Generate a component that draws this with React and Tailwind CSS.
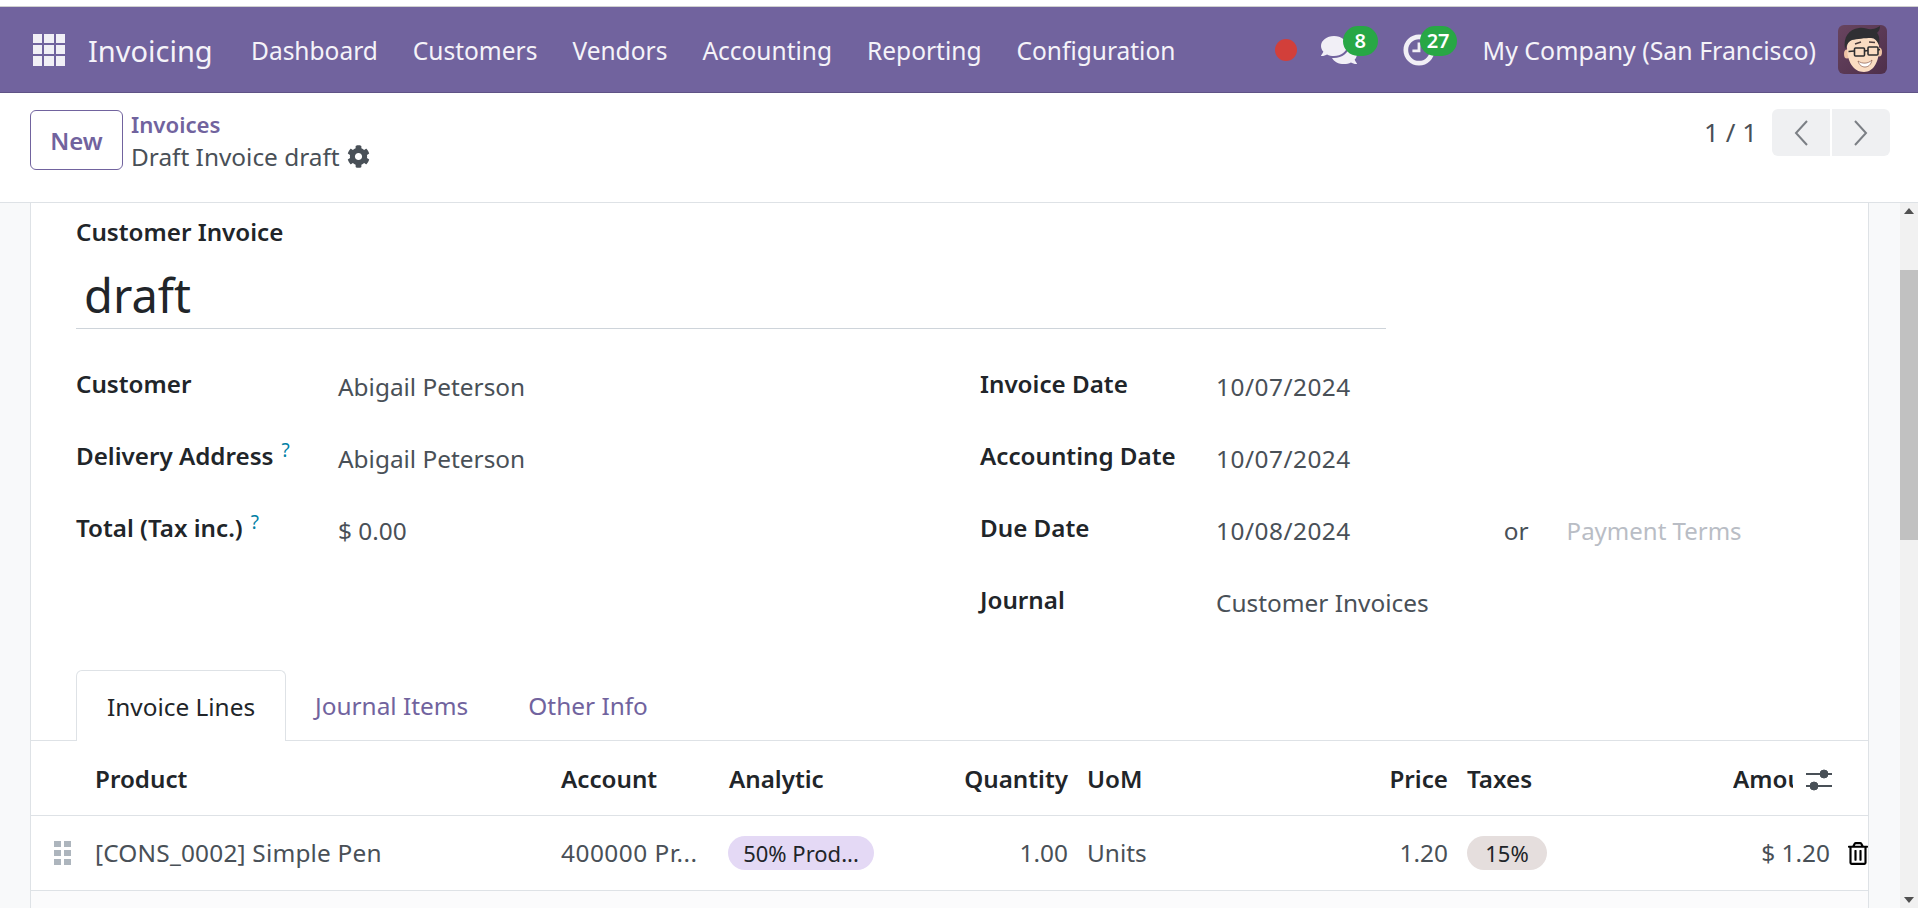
import { FaCog, FaComments, FaRegTrashAlt } from "react-icons/fa";

const navItems = ["Dashboard", "Customers", "Vendors", "Accounting", "Reporting", "Configuration"];

const Avatar = () => (
  <svg viewBox="0 0 49 49" className="w-[49px] h-[49px] rounded-[6px]">
    <defs>
      <linearGradient id="avatarBg" x1="0" y1="0" x2="1" y2="1">
        <stop offset="0" stopColor="#68445f" />
        <stop offset="1" stopColor="#4e2f4b" />
      </linearGradient>
    </defs>
    <rect width="49" height="49" fill="url(#avatarBg)" />
    <ellipse cx="9" cy="29" rx="3" ry="4.5" fill="#eec3a5" />
    <ellipse cx="41" cy="27" rx="3" ry="4.5" fill="#eec3a5" />
    <path d="M9 22C9 14 16 11 26 11s16 4 15 13c0 12-5 23-15 23C15 47 9 36 9 22z" fill="#fadcc2" />
    <path d="M7 24C5 12 11 4 21 3c6-1 9 2 13 1 3 0 6-2 8-3 0 3-1 5-3 7 2 2 3 6 2 12-2-4-4-7-8-7-6 0-14 1-19 2-3 1-5 4-7 9z" fill="#2f2f33" />
    <rect x="16.5" y="23" width="10" height="8" rx="1" fill="none" stroke="#2d2d2f" strokeWidth="1.6" />
    <rect x="30" y="22" width="10" height="8" rx="1" fill="none" stroke="#2d2d2f" strokeWidth="1.6" />
    <path d="M26.5 26l3.5-.5M16.5 26l-6 .5M40 25l2-.5" stroke="#2d2d2f" strokeWidth="1.6" />
    <path d="M17 19l6-2M31 17l6 .5" stroke="#4a3b3b" strokeWidth="1.4" />
    <path d="M20 36c4 3 10 3 14-1-1 5-4 7-7 7s-6-2-7-6z" fill="#fff" stroke="#8a5a4a" strokeWidth="0.7" />
  </svg>
);

const Badge = ({ children, className }) => (
  <span className={`absolute top-[-8px] h-[30px] rounded-full bg-[#28a745] text-white text-[20px] font-semibold flex items-center justify-center ${className}`}>
    {children}
  </span>
);

const Field = ({ label, help, children }) => (
  <div className="flex h-[72px]">
    <div className="w-[262px] shrink-0 text-[24.2px] leading-[29px] font-semibold text-[#212529] whitespace-nowrap">
      {label}
      {help && <span className="ml-[8px] text-[19px] leading-none font-normal text-[#0180a5] relative top-[-8px]">?</span>}
    </div>
    <div className="flex-1 pt-[3px] text-[24.4px] leading-[30px] text-[#495057] whitespace-nowrap">{children}</div>
  </div>
);

const Chevron = ({ d }) => (
  <svg viewBox="0 0 16 28" className="w-[16px] h-[28px]" fill="none" stroke="#7b7f85" strokeWidth="2">
    <path d={d} />
  </svg>
);

export default function App() {
  return (
    <div className="h-screen overflow-hidden flex flex-col bg-white font-['Noto_Sans',sans-serif]">
      <div className="h-[7px] shrink-0 bg-white border-b border-[#d0d0d0]"></div>

      {/* navbar */}
      <div className="h-[86px] shrink-0 bg-[#71639e] border-b border-[#5f5386] flex items-center text-[#f5f3f9]">
        <div className="ml-[33px] grid grid-cols-3 gap-[2px] w-[32px] h-[32px]">
          {Array.from({ length: 9 }).map((_, i) => (
            <span key={i} className="bg-[#f1eff6]"></span>
          ))}
        </div>
        <div className="ml-[23px] w-[163px] pt-[2px] text-[29px] leading-none">Invoicing</div>
        <div className="flex gap-[35px] pt-[3px] text-[24.5px]">
          {navItems.map((item) => (
            <span key={item}>{item}</span>
          ))}
        </div>
        <div className="ml-auto flex items-center pr-[31px]">
          <span className="w-[22px] h-[22px] rounded-full bg-[#d23f3a]"></span>
          <span className="relative ml-[24px] w-[36px]">
            <FaComments className="w-[36px] h-[32px] text-[#f1eff6]" />
            <Badge className="left-[22px] w-[35px]">8</Badge>
          </span>
          <span className="relative ml-[46px] w-[32px] mr-[48px]">
            <svg viewBox="0 0 34 34" className="w-[32px] h-[32px]" fill="none" stroke="#f1eff6">
              <circle cx="17" cy="17" r="14" strokeWidth="5" />
              <path d="M17 9v9h-7" strokeWidth="3" />
            </svg>
            <Badge className="left-[17px] w-[37px]">27</Badge>
          </span>
          <span className="text-[24.9px] pt-[2px] mr-[22px] whitespace-nowrap">My Company (San Francisco)</span>
          <Avatar />
        </div>
      </div>

      {/* control panel */}
      <div className="h-[110px] shrink-0 border-b border-[#dee2e6] flex items-start pl-[30px] pr-[28px] pt-[16px]">
        <button className="w-[93px] h-[60px] mt-px pt-[2px] border border-[#71639e] rounded-[6px] text-[#71639e] text-[24px] font-semibold">
          New
        </button>
        <div className="ml-[8px] whitespace-nowrap">
          <div className="text-[#71639e] text-[22.2px] leading-[31px] font-semibold">Invoices</div>
          <div className="flex items-center gap-[7px] mt-px text-[24.4px] leading-[31px] text-[#495057]">
            Draft Invoice draft <FaCog className="w-[23px] h-[23px]" />
          </div>
        </div>
        <div className="ml-auto flex items-center h-[47px] text-[26px] text-[#495057]">
          <span className="mr-[15px]">1 / 1</span>
          <span className="w-[58px] h-[47px] bg-[#eff0f2] rounded-l-[6px] flex items-center justify-center">
            <Chevron d="M14 2L3 14l11 12" />
          </span>
          <span className="ml-[2px] w-[58px] h-[47px] bg-[#eff0f2] rounded-r-[6px] flex items-center justify-center">
            <Chevron d="M2 2l11 12L2 26" />
          </span>
        </div>
      </div>

      {/* content */}
      <div className="flex-1 flex min-h-0">
        <div className="w-[30px] bg-[#f8f9fa] border-r border-[#dee2e6] box-content shrink-0"></div>
        <div className="flex-1 flex flex-col min-w-0">
          <div className="pl-[45px] pt-[14px]">
            <div className="text-[24.2px] leading-[30px] font-semibold text-[#212529]">Customer Invoice</div>
            <div className="w-[1310px] h-[72px] mt-[10px] border-b border-[#ced4da] pl-[8px] text-[47px] leading-[76px] text-[#212529]">
              draft
            </div>
            <div className="mt-[40px] grid grid-cols-[904px_1fr]">
              <div>
                <Field label="Customer">Abigail Peterson</Field>
                <Field label="Delivery Address" help>Abigail Peterson</Field>
                <Field label="Total (Tax inc.)" help>$ 0.00</Field>
              </div>
              <div>
                <Field label="Invoice Date">
                  <span className="ml-[-26px] tracking-[0.5px]">10/07/2024</span>
                </Field>
                <Field label="Accounting Date">
                  <span className="ml-[-26px] tracking-[0.5px]">10/07/2024</span>
                </Field>
                <Field label="Due Date">
                  <span className="ml-[-26px] tracking-[0.5px]">10/08/2024</span>
                  <span className="ml-[153px]">or</span>
                  <span className="ml-[38px] text-[24px] text-[#b9bdc5]">Payment Terms</span>
                </Field>
                <Field label="Journal">
                  <span className="ml-[-26px]">Customer Invoices</span>
                </Field>
              </div>
            </div>
          </div>

          {/* tabs */}
          <div className="mt-[13px] h-[71px] shrink-0 border-b border-[#dee2e6] pl-[45px] flex items-end text-[24.4px]">
            <div className="w-[210px] h-[71px] mb-[-1px] pt-[2px] bg-white border border-b-0 border-[#dee2e6] rounded-t-[6px] flex items-center justify-center text-[#212529]">
              Invoice Lines
            </div>
            <div className="h-[70px] ml-[29px] pt-[3px] flex items-center text-[#71639e]">Journal Items</div>
            <div className="h-[70px] ml-[60px] pt-[3px] flex items-center text-[#71639e]">Other Info</div>
          </div>

          {/* lines header */}
          <div className="h-[75px] shrink-0 pt-[3px] border-b border-[#dee2e6] grid grid-cols-[64px_466px_168px_161px_178px_222px_158px_192px_153px_37px_38px] items-center text-[24.2px] font-semibold text-[#212529] whitespace-nowrap">
            <div></div>
            <div>Product</div>
            <div>Account</div>
            <div>Analytic</div>
            <div className="text-right">Quantity</div>
            <div className="pl-[19px]">UoM</div>
            <div className="text-right">Price</div>
            <div className="pl-[19px]">Taxes</div>
            <div className="ml-auto w-[60px] overflow-hidden">Amount</div>
            <div className="col-span-2">
              <svg viewBox="0 0 28 24" className="ml-[12px] w-[28px] h-[24px]" fill="#495057" stroke="#495057">
                <path d="M1 6h26M1 18h26" strokeWidth="2" />
                <circle cx="19" cy="6" r="4" />
                <circle cx="9" cy="18" r="4" />
              </svg>
            </div>
          </div>

          {/* line */}
          <div className="h-[75px] shrink-0 border-b border-[#dee2e6] grid grid-cols-[64px_466px_168px_161px_178px_222px_158px_192px_153px_37px_38px] items-center text-[24.4px] text-[#495057] whitespace-nowrap">
            <div className="pl-[23px] grid grid-cols-[7px_7px] gap-[3px] w-[41px]">
              {Array.from({ length: 6 }).map((_, i) => (
                <span key={i} className="h-[6px] bg-[#adb5bd]"></span>
              ))}
            </div>
            <div className="tracking-[0.2px]">[CONS_0002] Simple Pen</div>
            <div className="tracking-[0.5px]">400000 Pr...</div>
            <div>
              <span className="inline-flex items-center justify-center w-[146px] h-[34px] ml-[-1px] rounded-full bg-[#e4d9f5] text-[#212529] text-[22px]">
                50% Prod...
              </span>
            </div>
            <div className="text-right">1.00</div>
            <div className="pl-[19px]">Units</div>
            <div className="text-right">1.20</div>
            <div className="pl-[19px]">
              <span className="inline-flex items-center justify-center w-[80px] h-[34px] rounded-full bg-[#e5dedd] text-[#212529] text-[22px]">
                15%
              </span>
            </div>
            <div className="col-span-2 text-right">$ 1.20</div>
            <div className="pl-[18px]">
              <FaRegTrashAlt className="w-[20px] h-[23px] text-black" />
            </div>
          </div>
          <div className="flex-1 bg-[#fbfbfc]"></div>
        </div>
        <div className="w-[31px] bg-[#f8f9fa] border-l border-[#dee2e6] box-content shrink-0"></div>

        {/* scrollbar */}
        <div className="w-[18px] shrink-0 bg-[#f1f1f1] flex flex-col justify-between items-center py-[5px] relative">
          <span className="w-0 h-0 border-x-[5px] border-x-transparent border-b-[6px] border-b-[#505050]"></span>
          <span className="absolute left-0 top-[67px] w-[18px] h-[270px] bg-[#c1c1c1]"></span>
          <span className="w-0 h-0 border-x-[5px] border-x-transparent border-t-[6px] border-t-[#505050]"></span>
        </div>
      </div>
    </div>
  );
}
